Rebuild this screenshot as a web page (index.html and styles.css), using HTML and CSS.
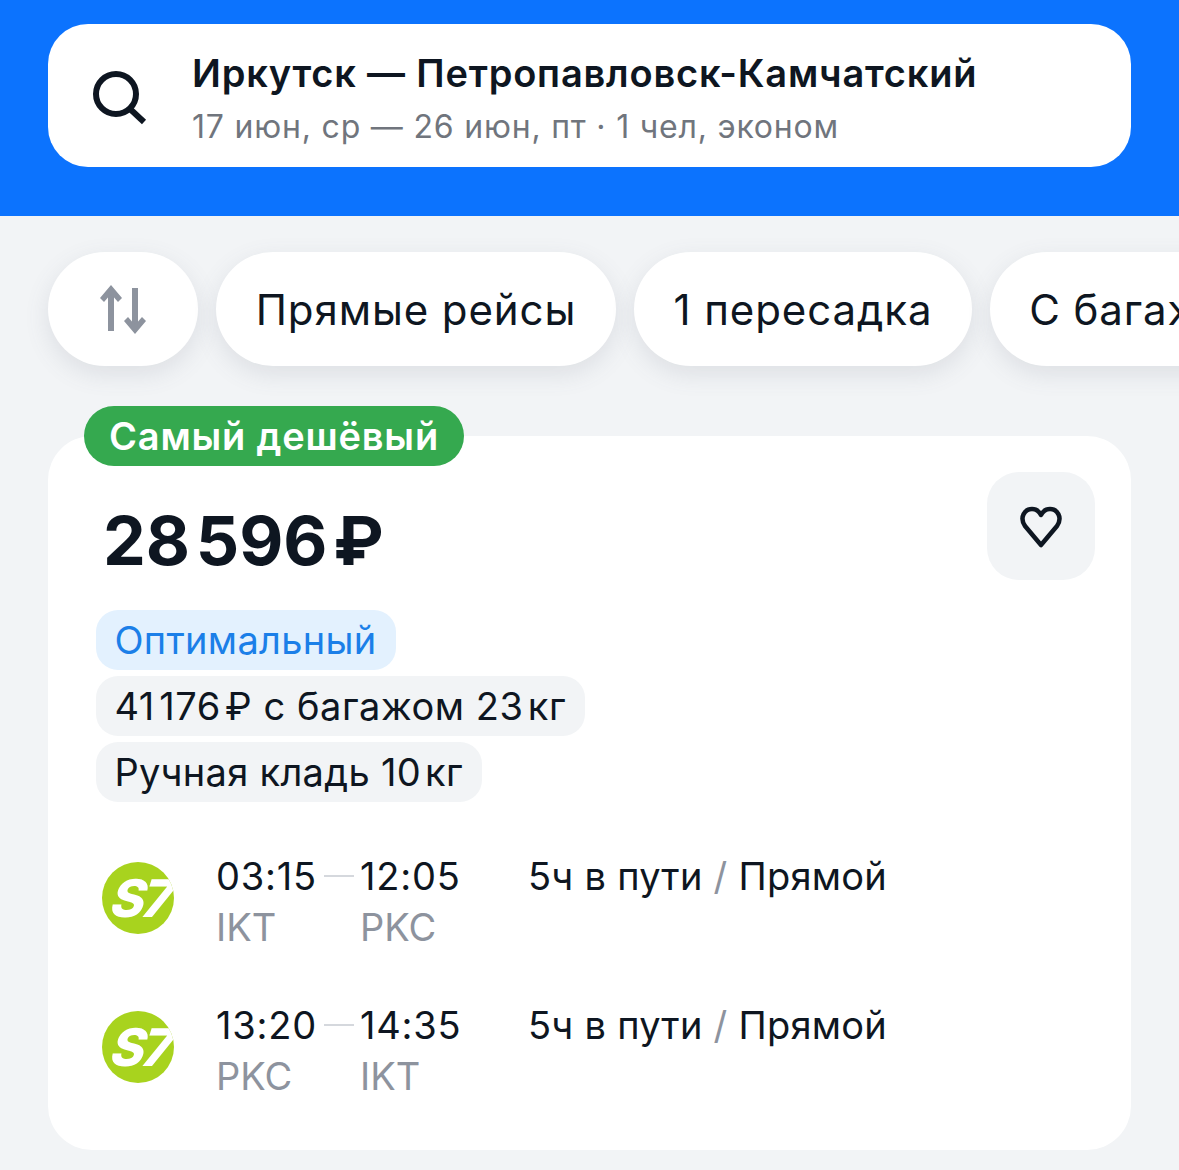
FILE: index.html
```html
<!DOCTYPE html>
<html lang="ru">
<head>
  <meta charset="UTF-8">
  <meta name="viewport" content="width=device-width, initial-scale=1">
  <title>Иркутск — Петропавловск-Камчатский</title>
  <link rel="stylesheet" href="styles.css">
</head>
<body>
  <header class="top">
    <div class="search">
      <svg class="search-icon" width="56" height="56" viewBox="0 0 56 56" fill="none" stroke="#0e1621" stroke-width="6">
        <circle cx="25" cy="25" r="20"/>
        <path d="M38 39 L53 53"/>
      </svg>
      <div class="search-text">
        <div class="route">Иркутск — Петропавловск-Камчатский</div>
        <div class="dates">17 июн, ср — 26 июн, пт · 1 чел, эконом</div>
      </div>
    </div>
  </header>

  <div class="chips">
    <div class="chip chip-sort">
      <svg width="50" height="50" viewBox="0 0 50 50" fill="#8d939e">
        <path d="M10 8 H16 V47 H10 Z"/>
        <path d="M13 1 L24 14 L20 18 L13 10 L6 18 L2 14 Z"/>
        <path d="M34 4 H40 V44 H34 Z"/>
        <path d="M37 50 L48 37 L44 33 L37 41 L30 33 L26 37 Z"/>
      </svg>
    </div>
    <div class="chip chip-direct">Прямые рейсы</div>
    <div class="chip chip-one">1 пересадка</div>
    <div class="chip chip-bag">С багажом</div>
  </div>

  <div class="card">
    <div class="badge">Самый дешёвый</div>
    <div class="fav">
      <svg width="44" height="44" viewBox="0 0 44 44" fill="none" stroke="#0e1621" stroke-width="4.5" stroke-linejoin="round">
        <path d="M22 39 L6 20 C0 11 6 3 13 3 C17 3 20 5 22 9 C24 5 27 3 31 3 C38 3 44 11 38 20 Z"/>
      </svg>
    </div>
    <div class="price">28<span class="thin"> </span>596<span class="thin"> </span>₽</div>
    <div class="tags">
      <span class="tag tag-blue">Оптимальный</span>
      <span class="tag tag-bag">41<span class="thin"> </span>176<span class="thin"> </span>₽ с багажом 23<span class="thin"> </span>кг</span>
      <span class="tag">Ручная кладь 10<span class="thin"> </span>кг</span>
    </div>

    <div class="flight">
      <div class="logo"><span>S7</span></div>
      <div class="times">
        <div class="time">03:15</div>
        <div class="dash"></div>
        <div class="time">12:05</div>
        <div class="code">IKT</div>
        <div></div>
        <div class="code">PKC</div>
      </div>
      <div class="info">5ч в пути <span class="slash">/</span> Прямой</div>
    </div>

    <div class="flight">
      <div class="logo"><span>S7</span></div>
      <div class="times">
        <div class="time">13:20</div>
        <div class="dash"></div>
        <div class="time">14:35</div>
        <div class="code">PKC</div>
        <div></div>
        <div class="code">IKT</div>
      </div>
      <div class="info">5ч в пути <span class="slash">/</span> Прямой</div>
    </div>
  </div>
</body>
</html>
```

FILE: styles.css
```css
html, body {
  margin: 0;
  height: 1170px;
  overflow: hidden;
}
body {
  font-family: Inter, "Noto Sans", sans-serif;
  background-color: #f2f4f6;
  color: #0e1621;
}
.top {
  height: 216px;
  box-sizing: border-box;
  padding: 24px 48px 0;
  background-color: #0c73fe;
}
.search {
  height: 143px;
  border-radius: 40px;
  background-color: #fff;
  display: flex;
  align-items: center;
  gap: 45px;
  padding-left: 43px;
}
.search-icon {
  flex-shrink: 0;
  margin-top: 2px;
}
.search-text {
  margin-top: 6px;
}
.route {
  font-size: 38px;
  font-weight: 600;
  line-height: 48px;
  letter-spacing: 0.8px;
}
.dates {
  margin-top: 8px;
  font-size: 32px;
  line-height: 44px;
  letter-spacing: 0.8px;
  color: #70757d;
}
.chips {
  display: flex;
  gap: 18px;
  padding: 36px 0 30px 48px;
  overflow: hidden;
}
.chip {
  height: 114px;
  border-radius: 57px;
  background-color: #fff;
  box-shadow: 0 8px 24px rgba(90, 100, 120, 0.14);
  font-size: 42px;
  letter-spacing: 0.9px;
  white-space: nowrap;
  display: flex;
  align-items: center;
  justify-content: center;
  box-sizing: border-box;
  flex-shrink: 0;
}
.chip-sort { width: 150px; }
.chip-direct { width: 400px; }
.chip-one { width: 338px; }
.chip-bag { width: 310px; }
.card {
  position: relative;
  margin: 40px 48px 0;
  height: 714px;
  box-sizing: border-box;
  padding: 59px 36px 0 48px;
  background-color: #fff;
  border-radius: 44px;
}
.badge {
  position: absolute;
  left: 36px;
  top: -30px;
  height: 60px;
  padding: 0 25px;
  border-radius: 30px;
  background-color: #35a94f;
  color: #fff;
  font-size: 38px;
  font-weight: 600;
  letter-spacing: 0.8px;
  line-height: 60px;
}
.fav {
  position: absolute;
  right: 36px;
  top: 36px;
  width: 108px;
  height: 108px;
  border-radius: 32px;
  background-color: #f2f4f6;
  display: flex;
  align-items: center;
  justify-content: center;
}
.fav svg {
  margin-top: 4px;
}
.price {
  margin-left: 7px;
  font-size: 68px;
  font-weight: 700;
  line-height: 90px;
}
.thin {
  font-size: 0.35em;
}
.tags {
  margin-top: 8px;
  display: flex;
  flex-direction: column;
  align-items: flex-start;
  gap: 6px;
}
.tag {
  height: 60px;
  padding: 0 19px 0 18.5px;
  border-radius: 22px;
  background-color: #f2f4f6;
  font-size: 38px;
  letter-spacing: 0.3px;
  line-height: 60px;
  white-space: nowrap;
}
.tag-bag {
  letter-spacing: 0.55px;
}
.tag-blue {
  background-color: #e3f1fe;
  color: #1b7fe8;
}
.flight {
  display: flex;
  margin-top: 48px;
  height: 101px;
}
.logo {
  width: 72px;
  height: 72px;
  margin: 12px 42px 0 6px;
  border-radius: 50%;
  background-color: #a8d31e;
  color: #fff;
  display: flex;
  align-items: center;
  justify-content: center;
  flex-shrink: 0;
  overflow: hidden;
}
.logo span {
  font-size: 52px;
  font-weight: 800;
  font-style: italic;
  letter-spacing: -3px;
  transform: translateX(3px) skewX(-8deg);
}
.times {
  display: grid;
  grid-template-columns: 100px 44px 168px;
  grid-template-rows: 50px 52px;
  padding-top: 1px;
}
.time {
  font-size: 38px;
  letter-spacing: 0.8px;
  line-height: 50px;
}
.dash {
  width: 30px;
  height: 2px;
  margin: 24px 0 0 8px;
  background-color: #d5d8dd;
}
.code {
  font-size: 38px;
  line-height: 52px;
  color: #8d939e;
}
.info {
  padding-top: 1px;
  font-size: 38px;
  letter-spacing: 0.25px;
  line-height: 50px;
}
.slash {
  color: #8d939e;
}
```
